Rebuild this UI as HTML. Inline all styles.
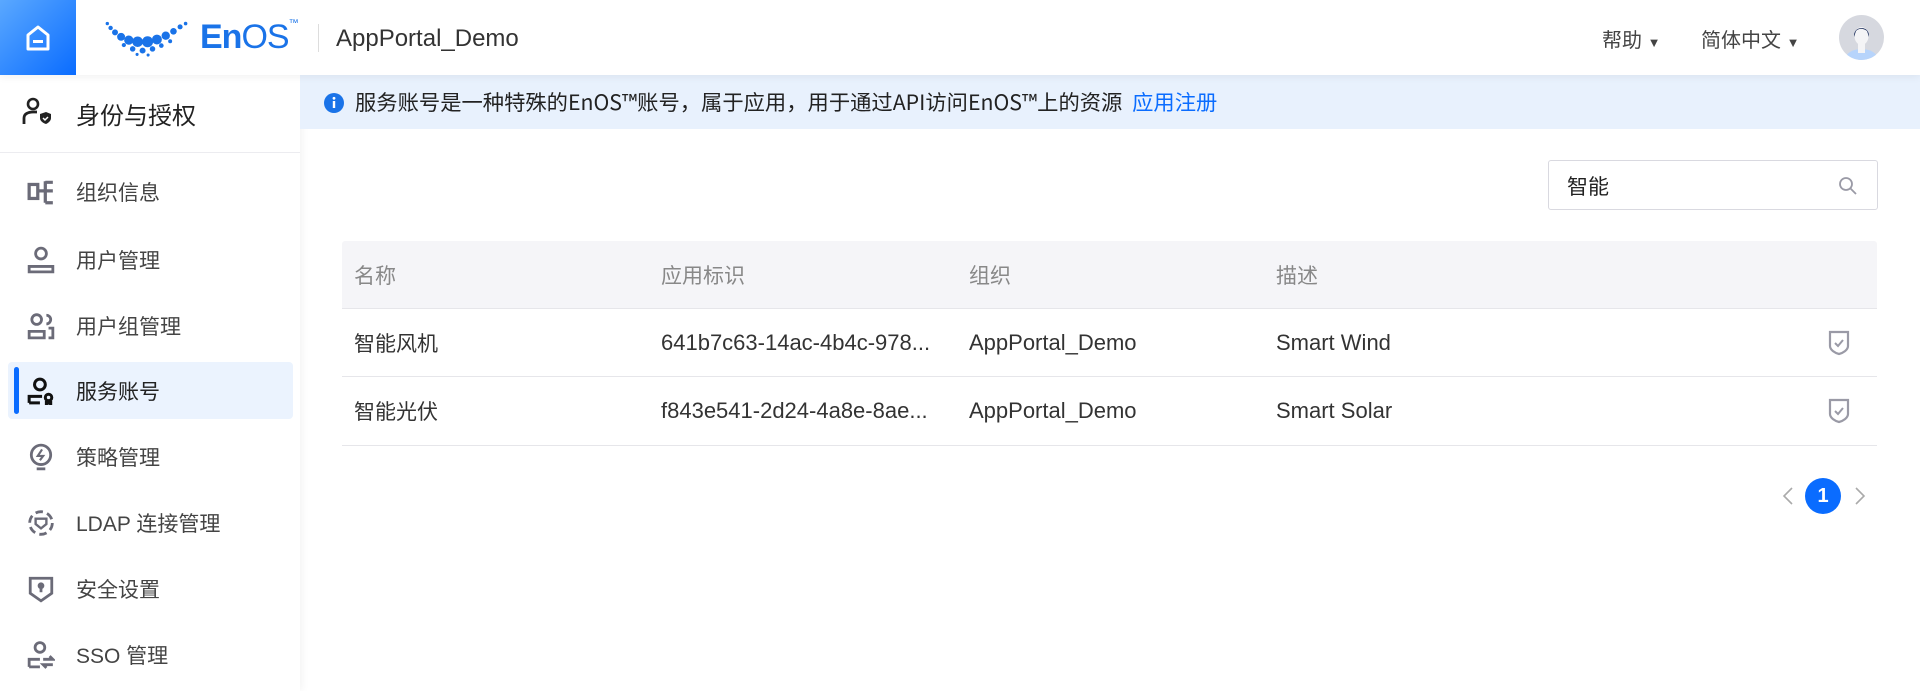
<!DOCTYPE html>
<html><head><meta charset="utf-8"><style>
*{margin:0;padding:0;box-sizing:border-box}
body{width:1920px;height:691px;overflow:hidden;background:#fff;font-family:"Liberation Sans","Noto Sans CJK SC",sans-serif;color:#333;position:relative}
.abs{position:absolute}
.header{left:0;top:0;width:1920px;height:75px;background:#fff;box-shadow:0 2px 8px rgba(0,0,0,.06);z-index:2}
.home{left:0;top:0;width:76px;height:75px;background:linear-gradient(135deg,#5aa8ff,#0a6cff)}
.side{left:0;top:75px;width:300px;height:616px;background:#fff;box-shadow:2px 0 8px rgba(0,0,0,.05)}
.mi{position:absolute;left:0;width:300px;height:40px;display:flex;align-items:center;font-size:21px;color:#444}
.mi svg{position:absolute;left:27px}
.mi span{position:absolute;left:76px}
.row{position:absolute;left:342px;width:1535px;border-bottom:1px solid #e6e6ea;font-size:21px;color:#333}
.row div{position:absolute;top:50%;transform:translateY(-50%);white-space:nowrap}
.l{font-size:22px}
</style></head><body>
<div class="abs header">
 <div class="abs home"><svg class="abs" style="left:25px;top:25px" width="26" height="26" viewBox="0 0 26 26"><path d="M3 10 L13 2 L23 10 V24 H3 Z" fill="none" stroke="#fff" stroke-width="3" stroke-linejoin="round"/><rect x="8" y="15" width="10" height="3" fill="#fff"/></svg></div>
 <svg class="abs" style="left:104px;top:20px" width="86" height="38" viewBox="0 0 78 34">
  <g fill="#1a73e8"><circle cx="3" cy="3" r="1.5"/><circle cx="6" cy="7" r="2"/><circle cx="10" cy="11" r="2.7"/><circle cx="15.5" cy="15" r="3.6"/><circle cx="22.5" cy="18" r="4.2"/><circle cx="30.5" cy="19.5" r="4.8"/><circle cx="39.5" cy="19.5" r="5"/><circle cx="48" cy="17.5" r="4.5"/><circle cx="56" cy="14" r="3.8"/><circle cx="63" cy="10" r="3"/><circle cx="69" cy="6" r="2.3"/><circle cx="74" cy="3" r="1.6"/><circle cx="26" cy="26" r="2.5"/><circle cx="35" cy="27.5" r="2.7"/><circle cx="44" cy="26" r="2.5"/><circle cx="52" cy="23" r="2.1"/><circle cx="18" cy="22.5" r="1.9"/><circle cx="60" cy="19" r="1.8"/><circle cx="30" cy="31" r="1.4"/><circle cx="40" cy="31.5" r="1.4"/></g></svg>
 <div class="abs" style="left:200px;top:18px;font-size:34px;font-weight:bold;color:#1a73e8;letter-spacing:-1px">En<span style="font-weight:normal">OS</span><span style="font-size:10px;vertical-align:top;font-weight:normal">™</span></div>
 <div class="abs" style="left:318px;top:24px;width:1px;height:28px;background:#ddd"></div>
 <div class="abs" style="left:336px;top:25px;font-size:24px;color:#333">AppPortal_Demo</div>
 <div class="abs" style="left:1602px;top:24px;font-size:20px;color:#444">帮助 <span style="font-size:13px">▼</span></div>
 <div class="abs" style="left:1701px;top:24px;font-size:20px;color:#444">简体中文 <span style="font-size:13px">▼</span></div>
 <svg class="abs" style="left:1839px;top:15px" width="45" height="45" viewBox="0 0 45 45"><defs><clipPath id="c"><circle cx="22.5" cy="22.5" r="22.5"/></clipPath></defs><g clip-path="url(#c)"><rect width="45" height="45" fill="#d6d8df"/><ellipse cx="22.5" cy="44" rx="16" ry="10" fill="#b7d4fb"/><rect x="19" y="28" width="7" height="10" fill="#f4f4f6"/><ellipse cx="22.5" cy="21" rx="7" ry="9" fill="#f4f4f6"/><path d="M15 22 C14 10 31 10 30 22 L28 16 C24 13 20 13 17 16 Z" fill="#1b2d5b"/></g></svg>
</div>
<div class="abs side">
 <svg class="abs" style="left:22px;top:22px" width="30" height="28" viewBox="0 0 30 28"><circle cx="11" cy="7" r="5" fill="none" stroke="#222" stroke-width="2.6"/><path d="M2 27 V21 C2 17 6 15 11 15 H15" fill="none" stroke="#222" stroke-width="2.8"/><path d="M18 17 L24 15 L29 17 V21 C29 24 26 26 24 27 C21 26 18 24 18 21 Z" fill="#222"/><path d="M21 21 l2 2 l3-3" stroke="#fff" stroke-width="1.5" fill="none"/></svg>
 <div class="abs" style="left:76px;top:21px;font-size:24px;color:#222">身份与授权</div>
 <div class="abs" style="left:0;top:77px;width:300px;height:1px;background:#ececf0"></div>
 <div class="abs" style="left:8px;top:287px;width:285px;height:57px;background:#ebf3fe;border-radius:4px"></div>
 <div class="abs" style="left:14px;top:292px;width:5px;height:47px;background:#0a6cff;border-radius:3px"></div>
</div>
<div class="mi" style="top:172px"><svg width="28" height="28" viewBox="0 0 26 26" fill="none" stroke="#6b6b78" stroke-width="3"><rect x="2" y="6" width="8" height="13"/><path d="M10 12 H24 M17 3 V23 M17 4 H24 M17 23 H24"/></svg><span>组织信息</span></div>
<div class="mi" style="top:240px"><svg width="28" height="28" viewBox="0 0 26 26" fill="none" stroke="#6b6b78" stroke-width="2.6"><circle cx="13" cy="7" r="5"/><path d="M2 24 V19 H24 V24 Z"/></svg><span>用户管理</span></div>
<div class="mi" style="top:306px"><svg width="28" height="28" viewBox="0 0 26 26" fill="none" stroke="#6b6b78" stroke-width="2.6"><circle cx="9" cy="7" r="4.5"/><path d="M2 24 V18 H16 V24 Z M18 3 A4 4 0 0 1 18 11 M20 15 H24 V24 H20"/></svg><span>用户组管理</span></div>
<div class="mi" style="top:371px;color:#222"><svg width="28" height="28" viewBox="0 0 26 26" fill="none" stroke="#111" stroke-width="2.8"><circle cx="12" cy="7" r="5"/><path d="M2 24 V18 H14 M2 24 H12"/><circle cx="20" cy="19" r="3"/><path d="M18 22 L18 25 L20 24 L22 25 L22 22"/></svg><span>服务账号</span></div>
<div class="mi" style="top:437px"><svg width="28" height="28" viewBox="0 0 26 26" fill="none" stroke="#6b6b78" stroke-width="2.6"><circle cx="13" cy="11" r="9"/><path d="M9 24 H17"/><path d="M14 6 L10 12 H15 L12 16" stroke-width="2"/></svg><span>策略管理</span></div>
<div class="mi" style="top:503px"><svg width="28" height="28" viewBox="0 0 26 26" fill="none" stroke="#6b6b78" stroke-width="2.6"><circle cx="13" cy="13" r="10.5" stroke-dasharray="7 4"/><path d="M8 9 H18 V14 L13 18 L8 14 Z" stroke-width="2.2"/></svg><span>LDAP 连接管理</span></div>
<div class="mi" style="top:569px"><svg width="28" height="28" viewBox="0 0 26 26" fill="none" stroke="#6b6b78" stroke-width="2.6"><path d="M3 3 H23 V17 L13 24 L3 17 Z"/><circle cx="13" cy="10" r="1.8" fill="#6b6b78"/><path d="M13 11 V16" /></svg><span>安全设置</span></div>
<div class="mi" style="top:635px"><svg width="28" height="28" viewBox="0 0 26 26" fill="none" stroke="#6b6b78" stroke-width="2.6"><circle cx="12" cy="6" r="4.5"/><path d="M2 24 V17 H12 M2 24 H12 M15 17 H24 L21 14 M24 22 H15 L18 25"/></svg><span>SSO 管理</span></div>

<div class="abs" style="left:300px;top:75px;width:1620px;height:54px;background:#e8f1fd"></div>
<svg class="abs" style="left:324px;top:93px" width="20" height="20" viewBox="0 0 20 20"><circle cx="10" cy="10" r="10" fill="#1a73e8"/><rect x="8.8" y="8" width="2.4" height="7" fill="#fff"/><circle cx="10" cy="5.3" r="1.4" fill="#fff"/></svg>
<div class="abs" style="left:355px;top:88px;font-size:21.3px;color:#222;font-family:'Noto Sans CJK SC',sans-serif;line-height:28px;white-space:nowrap">服务账号是一种特殊的EnOS™账号，属于应用，用于通过API访问EnOS™上的资源 <span style="color:#0a6cff;margin-left:5px">应用注册</span></div>

<div class="abs" style="left:1548px;top:160px;width:330px;height:50px;border:1px solid #d9d9e0;border-radius:3px"></div>
<div class="abs" style="left:1567px;top:171px;font-size:21px;color:#222">智能</div>
<svg class="abs" style="left:1838px;top:176px" width="20" height="20" viewBox="0 0 20 20" fill="none" stroke="#9a9aa6" stroke-width="1.8"><circle cx="8" cy="8" r="6"/><path d="M12.5 12.5 L18 18"/></svg>

<div class="row" style="top:241px;height:68px;background:#f5f5f8;color:#888;border-radius:3px 3px 0 0"><div style="left:12px">名称</div><div style="left:319px">应用标识</div><div style="left:627px">组织</div><div style="left:934px">描述</div></div>
<div class="row" style="top:309px;height:68px"><div style="left:12px">智能风机</div><div class="l" style="left:319px">641b7c63-14ac-4b4c-978...</div><div class="l" style="left:627px">AppPortal_Demo</div><div class="l" style="left:934px">Smart Wind</div>
<svg style="position:absolute;left:1486px;top:50%;transform:translateY(-50%)" width="22" height="26" viewBox="0 0 22 26" fill="none" stroke="#9a9aa6" stroke-width="2.2"><path d="M2 2 H20 V16 C20 20 15 23 11 24 C7 23 2 20 2 16 Z"/><path d="M7 13 L10 16 L15 10" stroke-width="2"/></svg></div>
<div class="row" style="top:377px;height:69px"><div style="left:12px">智能光伏</div><div class="l" style="left:319px">f843e541-2d24-4a8e-8ae...</div><div class="l" style="left:627px">AppPortal_Demo</div><div class="l" style="left:934px">Smart Solar</div>
<svg style="position:absolute;left:1486px;top:50%;transform:translateY(-50%)" width="22" height="26" viewBox="0 0 22 26" fill="none" stroke="#9a9aa6" stroke-width="2.2"><path d="M2 2 H20 V16 C20 20 15 23 11 24 C7 23 2 20 2 16 Z"/><path d="M7 13 L10 16 L15 10" stroke-width="2"/></svg></div>

<svg class="abs" style="left:1782px;top:486px" width="12" height="20" viewBox="0 0 12 20" fill="none" stroke="#aaa" stroke-width="1.6"><path d="M10 2 L2 10 L10 18"/></svg>
<div class="abs" style="left:1805px;top:478px;width:36px;height:36px;border-radius:50%;background:#0a6cff;color:#fff;font-size:20px;font-weight:bold;text-align:center;line-height:36px">1</div>
<svg class="abs" style="left:1854px;top:486px" width="12" height="20" viewBox="0 0 12 20" fill="none" stroke="#aaa" stroke-width="1.6"><path d="M2 2 L10 10 L2 18"/></svg>
</body></html>
